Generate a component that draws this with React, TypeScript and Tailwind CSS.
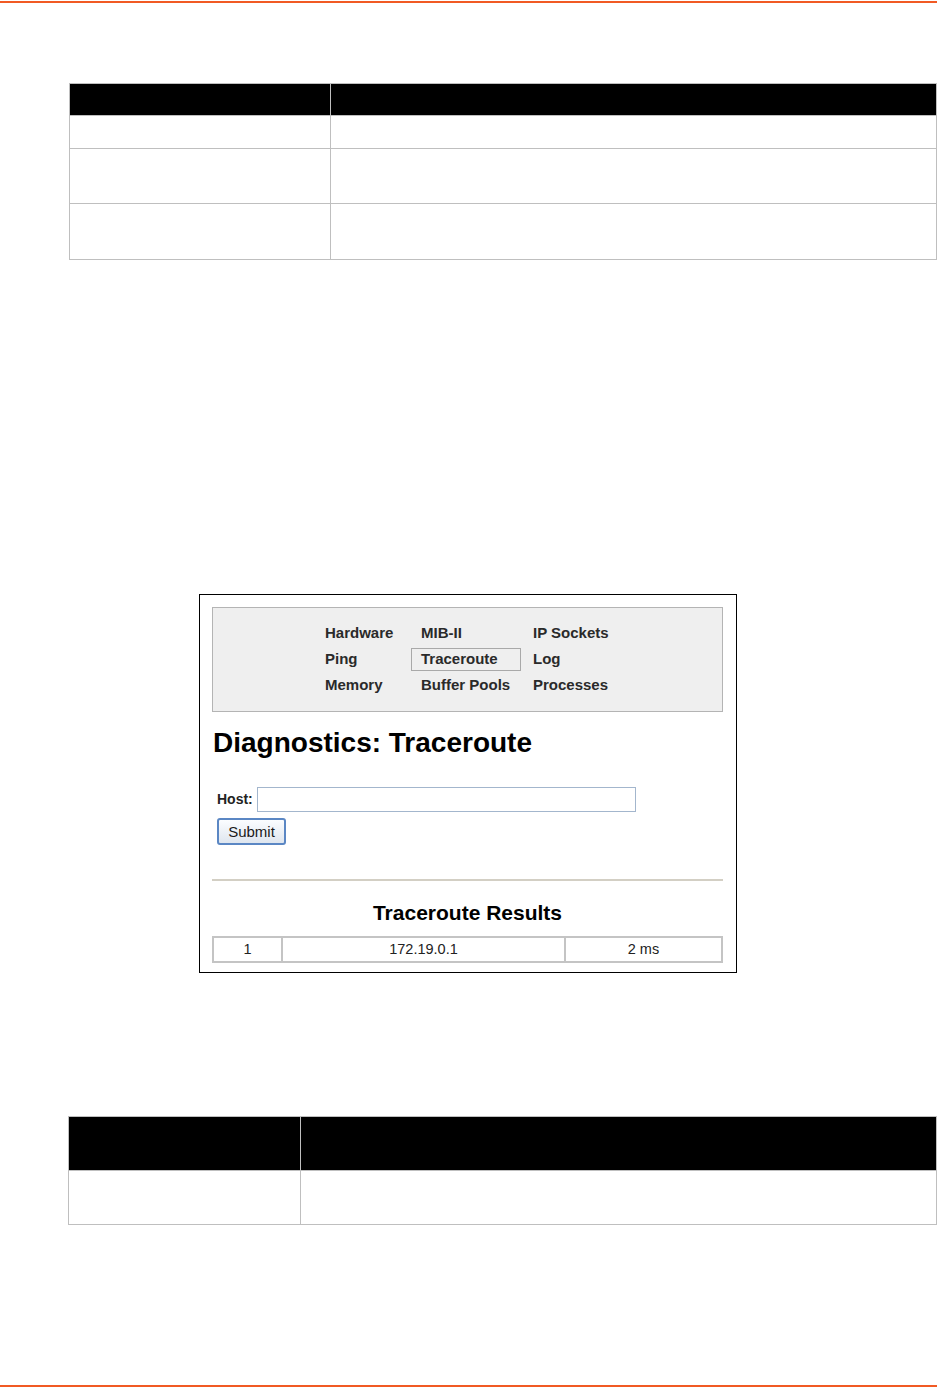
import React from "react";

const font = { fontFamily: '"Liberation Sans", Arial, sans-serif' };

const navRows = [
    ["Hardware", "MIB-II", "IP Sockets"],
    ["Ping", "Traceroute", "Log"],
    ["Memory", "Buffer Pools", "Processes"],
];

function DocTable({ first, rows }: { first: number; rows: { h: number; dark?: boolean }[] }) {
    return (
        <div className="flex flex-col border border-[#bfbfbf]">
            {rows.map((r, i) => (
                <div
                    key={i}
                    className={`flex ${i < rows.length - 1 ? "border-b border-[#bfbfbf]" : ""} ${
                        r.dark ? "bg-black" : "bg-white"
                    }`}
                    style={{ height: r.h }}>
                    <div className="border-r border-[#bfbfbf]" style={{ width: first }} />
                    <div className="flex-1" />
                </div>
            ))}
        </div>
    );
}

function TracerouteShot() {
    return (
        <div className="ml-[199px] flex h-[379px] w-[538px] flex-col border border-black bg-white px-[12px]" style={font}>
            <div className="mt-[12px] w-[511px] border border-[#b4b4b4] bg-[#efefef] pb-[13px] pl-[112px] pt-[12px]">
                <div className="grid grid-cols-[86px_122px_auto] text-[15px] font-bold text-[#2a2a2a]">
                    {navRows.map((row, ri) =>
                        row.map((label, ci) => (
                            <div key={`${ri}-${ci}`} className="flex h-[26px] items-center">
                                {ci === 1 ? (
                                    <span
                                        className={`flex h-[23px] w-[110px] items-center border px-[9px] ${
                                            label === "Traceroute" ? "border-[#a9a9a9]" : "border-transparent"
                                        }`}>
                                        {label}
                                    </span>
                                ) : (
                                    <span>{label}</span>
                                )}
                            </div>
                        )),
                    )}
                </div>
            </div>

            <h1 className="ml-px mt-[15px] text-[28px] font-bold leading-[32px] text-black">Diagnostics: Traceroute</h1>

            <div className="ml-[5px] mt-[28px] flex items-center">
                <span className="text-[14px] font-bold text-[#222]">Host:</span>
                <input className="ml-[4px] h-[25px] w-[379px] border border-[#a3b6cd] bg-white outline-none" />
            </div>
            <button className="ml-[5px] mt-[6px] h-[27px] w-[69px] rounded-[3px] border-2 border-[#5b87c4] bg-gradient-to-b from-[#fbfdff] to-[#dfe6ef] pb-px text-[15px] leading-none text-[#1a1a1a]">
                Submit
            </button>

            <div className="mt-[34px] h-[2px] w-[511px] bg-[#d3cfc4]" />

            <h2 className="mt-[20px] w-[511px] text-center text-[21px] font-bold leading-[24px] text-black">
                Traceroute Results
            </h2>

            <div className="mt-[11px] flex h-[27px] w-[511px] border-2 border-[#c4c4c4] text-[14.5px] text-[#222]">
                <div className="flex w-[69px] items-center justify-center border-r-2 border-[#c4c4c4]">1</div>
                <div className="flex w-[283px] items-center justify-center border-r-2 border-[#c4c4c4]">172.19.0.1</div>
                <div className="flex flex-1 items-center justify-center">2 ms</div>
            </div>
        </div>
    );
}

export default function App() {
    return (
        <div className="flex h-[1388px] w-[937px] flex-col overflow-hidden bg-white">
            <div className="mt-px h-[2px] w-full bg-[#f15a24]" />

            <div className="ml-[69px] mt-[80px] w-[868px]">
                <DocTable first={261} rows={[{ h: 32, dark: true }, { h: 33 }, { h: 55 }, { h: 55 }]} />
            </div>

            <div className="mt-[334px]">
                <TracerouteShot />
            </div>

            <div className="ml-[68px] mt-[143px] w-[869px]">
                <DocTable first={232} rows={[{ h: 54, dark: true }, { h: 53 }]} />
            </div>

            <div className="mt-[160px] h-[2px] w-full bg-[#f15a24]" />
        </div>
    );
}
